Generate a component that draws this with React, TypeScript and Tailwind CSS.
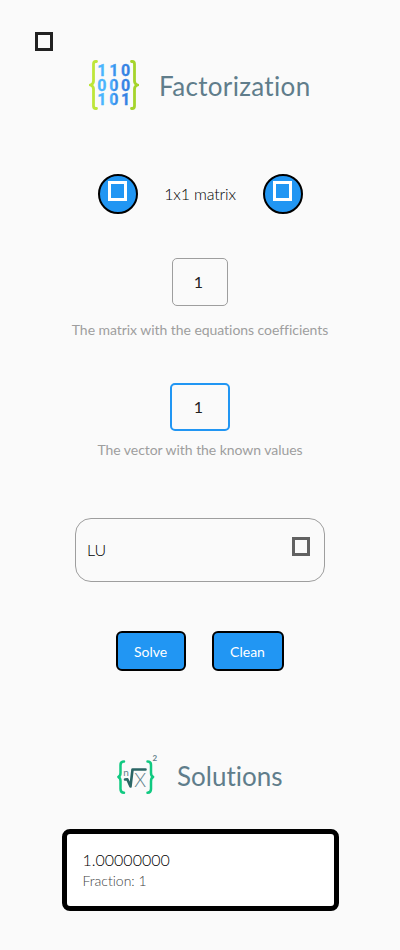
import type { ReactNode } from "react";

function MatrixLogo() {
  const rows = ["110", "000", "101"];
  return (
    <svg width="50" height="50" viewBox="0 0 50 50" className="shrink-0">
      <defs>
        <linearGradient id="digits" gradientUnits="userSpaceOnUse" x1="8" y1="0" x2="41" y2="0">
          <stop offset="0" stopColor="#4db8ff" />
          <stop offset="0.46" stopColor="#48adfb" />
          <stop offset="0.54" stopColor="#3b8eea" />
          <stop offset="1" stopColor="#347fe0" />
        </linearGradient>
      </defs>
      <path d="M7.5 1.5H6.8Q4.5 1.5 4.5 4V21Q4.5 24 1.5 25Q4.5 26 4.5 29V46Q4.5 48.5 6.8 48.5H7.5" fill="none" stroke="#bee63a" strokeWidth="2.8" strokeLinecap="round" />
      <path d="M42.5 1.5H43.2Q45.5 1.5 45.5 4V21Q45.5 24 48.5 25Q45.5 26 45.5 29V46Q45.5 48.5 43.2 48.5H42.5" fill="none" stroke="#a5d42c" strokeWidth="2.8" strokeLinecap="round" />
      <g fill="url(#digits)" stroke="url(#digits)" strokeWidth="0.3" strokeLinejoin="round" fontFamily="Roboto, sans-serif" fontWeight="700" fontSize="16" textAnchor="middle">
        {rows.map((row, r) =>
          row.split("").map((d, c) => (
            <text key={`${r}${c}`} x={12.9 + c * 11.9} y={15.8 + r * 14.8}>{d}</text>
          ))
        )}
      </g>
    </svg>
  );
}

function RootLogo() {
  return (
    <svg width="40" height="40" viewBox="0 0 40 40" className="shrink-0 overflow-visible">
      <g fill="none" stroke="#10c981" strokeWidth="2.5" strokeLinecap="round" strokeLinejoin="round">
        <path d="M7 6.5Q3.5 6.5 3.5 10V18Q3.5 21 1.4 22Q3.5 23 3.5 26V34Q3.5 37.7 7 37.7" />
        <path d="M30.5 6.5Q34 6.5 34 10V18Q34 21 36.1 22Q34 23 34 26V34Q34 37.7 30.5 37.7" />
      </g>
      <path d="M8 24.5L10.3 24.2L13.5 31.5L15.5 14.5H28.5" fill="none" stroke="#2b6665" strokeWidth="2.6" strokeLinecap="round" strokeLinejoin="round" />
      <g fontFamily="Lato, sans-serif" fill="#60808a" textAnchor="middle">
        <text x="9" y="21" fontSize="10">n</text>
        <text x="23.2" y="32" fontSize="19" fontWeight="300">X</text>
        <text x="37.8" y="6" fontSize="8" fontWeight="700">2</text>
      </g>
    </svg>
  );
}

function BoxGlyph({ className }: { className: string }) {
  return <span className={`block shrink-0 border-3 ${className}`} />;
}

function RoundButton() {
  return (
    <button className="flex h-10 w-10 justify-center rounded-full border-2 border-black bg-[#2196f3] pt-[5px]">
      <BoxGlyph className="h-5 w-[19px] border-white" />
    </button>
  );
}

function ActionButton({ children, className }: { children: ReactNode; className: string }) {
  return (
    <button className={`h-10 rounded-md border-2 border-black bg-[#2196f3] pt-0.5 pr-px text-sm text-white ${className}`}>
      {children}
    </button>
  );
}

export default function App() {
  return (
    <main className="h-[950px] w-[400px] overflow-hidden bg-[#fafafa] font-['Lato',sans-serif] text-[#212121] [font-variant-ligatures:none]">
      <header className="flex h-[60px] pt-8 pl-[35px]">
        <BoxGlyph className="h-[19px] w-[18px] border-[#212121]" />
      </header>

      <div className="flex h-[50px] items-center gap-5 pl-[89px]">
        <MatrixLogo />
        <h1 className="pt-0.5 text-[26px] leading-8 tracking-[0.33px] text-[#607d8b]">Factorization</h1>
      </div>

      <div className="mt-16 flex items-center justify-center gap-[25px]">
        <RoundButton />
        <span className="w-[75px] text-center text-base font-light tracking-[-0.15px] whitespace-nowrap text-black">1x1 matrix</span>
        <RoundButton />
      </div>

      <section className="mt-11 flex flex-col items-center">
        <div className="flex h-12 w-14 items-center justify-center rounded-[5px] border border-[#9e9e9e] pr-[3px] text-base">1</div>
        <p className="mt-3.5 text-sm leading-5 tracking-[-0.05px] text-[#9e9e9e]">The matrix with the equations coefficients</p>
      </section>

      <section className="mt-[43px] flex flex-col items-center">
        <div className="flex h-12 w-[60px] items-center justify-center rounded-[5px] border-2 border-[#2196f3] pr-[3px] text-base">1</div>
        <p className="mt-[9px] text-sm leading-5 tracking-[-0.05px] text-[#9e9e9e]">The vector with the known values</p>
      </section>

      <div className="mx-auto mt-[58px] flex h-16 w-[250px] items-center justify-between rounded-2xl border border-[#9e9e9e] pr-3.5 pl-[11px]">
        <span className="text-base font-light text-black">LU</span>
        <BoxGlyph className="mb-[7px] h-[19px] w-[18px] border-[#616161]" />
      </div>

      <div className="mt-[49px] flex justify-center gap-[26px]">
        <ActionButton className="w-[70px]">Solve</ActionButton>
        <ActionButton className="w-[72px]">Clean</ActionButton>
      </div>

      <div className="mt-[84px] flex h-10 items-center gap-5 pl-[117px]">
        <RootLogo />
        <h2 className="pt-0.5 text-[26px] leading-8 text-[#607d8b]">Solutions</h2>
      </div>

      <div className="mx-auto mt-[34px] h-[82px] w-[277px] rounded-lg border-5 border-black bg-white pt-[15px] pl-4">
        <div className="text-base leading-[22px] font-light text-black">1.00000000</div>
        <div className="text-sm leading-5 font-light text-[#424242]">Fraction: 1</div>
      </div>
    </main>
  );
}
